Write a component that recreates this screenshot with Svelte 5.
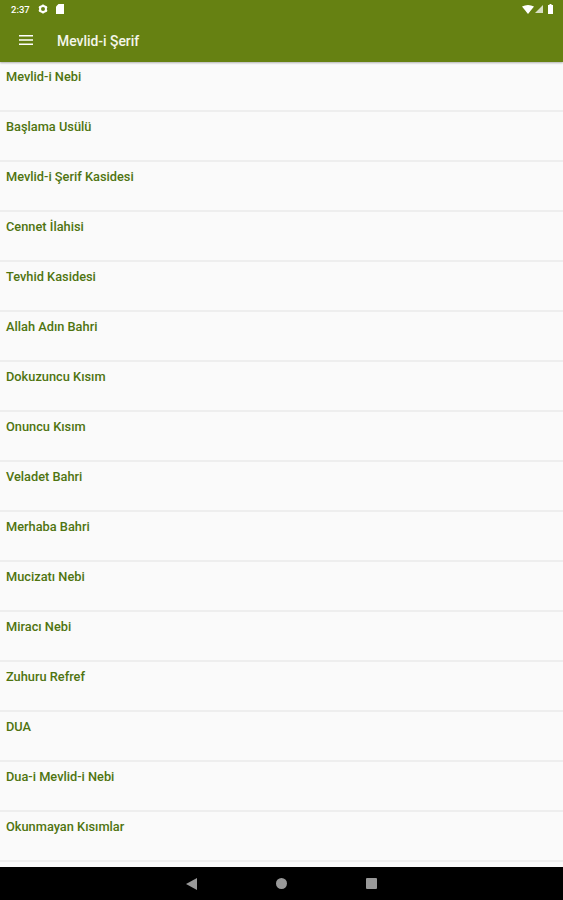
<script>
  const items = ["Mevlid-i Nebi","Başlama Usülü","Mevlid-i Şerif Kasidesi","Cennet İlahisi","Tevhid Kasidesi","Allah Adın Bahri","Dokuzuncu Kısım","Onuncu Kısım","Veladet Bahri","Merhaba Bahri","Mucizatı Nebi","Miracı Nebi","Zuhuru Refref","DUA","Dua-i Mevlid-i Nebi","Okunmayan Kısımlar"];
</script>

<div class="screen">
  <header class="top">
    <div class="status">
      <span class="time">2:37</span>
      <svg class="ic gear" viewBox="0 0 10 10"><circle cx="5" cy="5" r="3" fill="none" stroke="#fff" stroke-width="2"/><path d="M5 .5v2M5 7.5v2M.9 2.7l1.8 1M7.3 6.3l1.8 1M.9 7.3l1.8-1M7.3 3.7l1.8-1" stroke="#fff" stroke-width="1.6"/></svg>
      <svg class="ic card" viewBox="0 0 8 10"><path d="M2.5 0H8v10H0V2.500z" fill="#fff"/></svg>
      <span class="spacer"></span>
      <svg class="wifi" viewBox="0 0 12 9"><path d="M0 1.500Q6-1.500 12 1.500L6 9z" fill="#fff"/></svg>
      <svg class="signal" viewBox="0 0 8 8"><path d="M8 0V8H0z" fill="#fff" opacity=".75"/></svg>
      <svg class="batt" viewBox="0 0 5 10"><path d="M1.500 0h2v1H5v9H0V1h1.500z" fill="#fff"/></svg>
    </div>
    <div class="bar">
      <svg class="menu" viewBox="0 0 14 10"><path d="M0 0h14v1.600H0zM0 4.200h14v1.600H0zM0 8.400h14v1.600H0z" fill="#fff"/></svg>
      <span class="title">Mevlid-i Şerif</span>
    </div>
  </header>

  <ul class="list">
    {#each items as item}
      <li>{item}</li>
    {/each}
  </ul>

  <nav class="nav">
    <svg class="back" viewBox="0 0 11 12"><path d="M11 0V12L0 6z" fill="#999"/></svg>
    <span class="home"></span>
    <span class="recent"></span>
  </nav>
</div>

<style>
  :global(body) { margin: 0; background: #fff; }
  .screen { width: 563px; height: 900px; display: flex; flex-direction: column; overflow: hidden; font-family: Roboto, "Liberation Sans", sans-serif; background: #fff; }
  .top { background: #668112; height: 62px; flex: none; box-shadow: 0 1px 2px rgba(0,0,0,.3); position: relative; }
  .status { height: 18px; display: flex; align-items: center; padding: 0 10px 0 11px; color: #fff; }
  .time { font-size: 9.5px; font-weight: 500; width: 19px; }
  .ic { display: block; }
  .gear { width: 10px; height: 10px; margin-left: 8px; }
  .card { width: 8px; height: 10px; margin-left: 8px; }
  .spacer { flex: 1; }
  .wifi { width: 12px; height: 9px; }
  .signal { width: 8px; height: 8px; margin-left: 1px; }
  .batt { width: 5px; height: 10px; margin-left: 5px; }
  .bar { height: 44px; display: flex; align-items: center; padding-left: 19px; }
  .menu { width: 14px; height: 10px; }
  .title { color: #f4f6ea; font-size: 13.9px; font-weight: 500; margin-left: 24px; padding-top: 1px; }
  .list { list-style: none; margin: 0; padding: 0; flex: 1; overflow: hidden; background: #fafafa; }
  li { height: 48px; border-bottom: 2px solid #eeeeee; padding: 0 0 0 6px; font-size: 12.8px; font-weight: 500; line-height: 30px; color: #4f7410; }
  .nav { height: 33px; flex: none; background: #000; position: relative; }
  .back { width: 11px; height: 12px; position: absolute; left: 186px; top: 11px; }
  .home { width: 11px; height: 11px; border-radius: 50%; background: #999; position: absolute; left: 276px; top: 11px; }
  .recent { width: 11px; height: 11px; border-radius: 1px; background: #999; position: absolute; left: 366px; top: 11px; }
</style>
